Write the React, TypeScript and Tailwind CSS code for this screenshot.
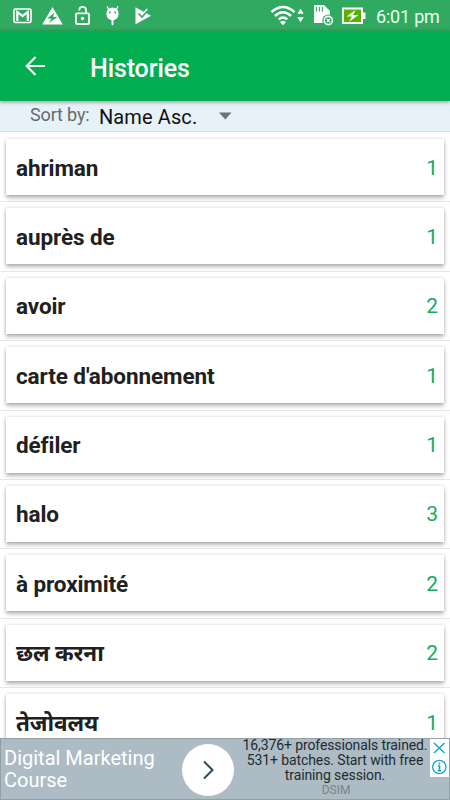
import React from "react";

const rows = [
  { word: "ahriman", count: 1 },
  { word: "auprès de", count: 1 },
  { word: "avoir", count: 2 },
  { word: "carte d'abonnement", count: 1 },
  { word: "défiler", count: 1 },
  { word: "halo", count: 3 },
  { word: "à proximité", count: 2 },
  { word: "छल करना", count: 2 },
  { word: "तेजोवलय", count: 1 },
];

function StatusBar() {
  return (
    <div className="flex h-[31px] shrink-0 items-center bg-[#30aa61] text-white">
      <svg width="160" height="31" viewBox="0 0 160 31" fill="none">
        <rect x="14" y="9" width="17" height="13.5" rx="1.5" stroke="#fff" strokeWidth="1.6" />
        <path d="M17.3 21V12L22.5 16.2L27.8 12V21" stroke="#fff" strokeWidth="2.2" />
        <path d="M52.5 7L62.8 24.5H42.2Z" fill="#fff" />
        <path d="M54.5 12.5L47 18.7L51.5 18.4L48.5 23L57.5 17L53 16.8Z" fill="#30aa61" />
        <rect x="76" y="13.3" width="13" height="10.7" rx="1" stroke="#fff" strokeWidth="1.8" />
        <path d="M79.3 10.5V10Q79.3 6.8 82.6 6.8T86 10V13" stroke="#fff" strokeWidth="1.8" />
        <circle cx="82.5" cy="18.5" r="1.7" fill="#fff" />
        <path d="M106.5 12.8A6 5.3 0 0 1 118.5 12.8V14.5A6 5.8 0 0 1 106.5 14.5Z" fill="#fff" />
        <path d="M109 10L107.2 6.8M116 10L117.8 6.8" stroke="#fff" strokeWidth="1.3" strokeLinecap="round" />
        <path d="M112.5 19V24.3" stroke="#fff" strokeWidth="2" strokeLinecap="round" />
        <circle cx="109.8" cy="12.5" r=".9" fill="#30aa61" />
        <circle cx="115.2" cy="12.5" r=".9" fill="#30aa61" />
        <path d="M135.5 7.2L151 15.8L135.5 24.3Z" fill="#fff" />
        <path d="M138.5 13.5L142 17L148 10.5" stroke="#30aa61" strokeWidth="1.6" />
        <path d="M144 12.6L147.3 9" stroke="#fff" strokeWidth="1.5" />
      </svg>
      <svg className="ml-[110px]" width="100" height="31" viewBox="270 0 100 31" fill="none">
        <path d="M271.5 12Q283 2 294.5 12M275 16Q283 8.7 291 16M278.7 19.4Q283 15.7 287.3 19.4" stroke="#fff" strokeWidth="2.4" />
        <path d="M280 22Q283 19.5 286 22L283 25.2Z" fill="#fff" />
        <path d="M297.3 13.7L300.5 8.8L303.7 13.7ZM297.3 17.3H303.7L300.5 22.2Z" fill="#fff" />
        <path d="M314 5H324L330 11V23H314Z" fill="#fff" />
        <path d="M316.5 7V11.5M319.5 7V11.5M322.5 7V11.5" stroke="#30aa61" strokeWidth="1.2" />
        <circle cx="328.3" cy="20.5" r="6" fill="#30aa61" />
        <circle cx="328.3" cy="20.5" r="4.1" stroke="#fff" strokeWidth="1.6" />
        <path d="M326.7 18.9L329.9 22.1M329.9 18.9L326.7 22.1" stroke="#fff" strokeWidth="1.3" />
        <rect x="343" y="8.5" width="19" height="14.5" fill="#57b200" stroke="#fff" strokeWidth="2" />
        <path d="M363 12.5H365.5V19H363Z" fill="#fff" />
        <path d="M355.5 10L346.5 16.5H352L349 21.8L358.5 15H353Z" fill="#fff" />
      </svg>
      <span className="ml-1.5 mt-[2px] whitespace-nowrap text-[18px] leading-[22px] tracking-[-0.2px] text-[#eafff0]">6:01 pm</span>
    </div>
  );
}

function AdBanner() {
  return (
    <div className="absolute inset-x-0 bottom-0 flex h-[62px] border border-[#92a0a7] bg-[#adbbc4]">
      <div className="mt-[8px] w-[181px] shrink-0 whitespace-nowrap pl-[3px] text-[20px] leading-[22px] text-white">
        Digital Marketing<br />Course
      </div>
      <div className="mt-[5px] flex size-[52px] shrink-0 items-center justify-center rounded-full bg-white">
        <svg width="14" height="20" viewBox="0 0 14 20" fill="none">
          <path d="M3 1.5L11.5 10L3 18.5" stroke="#254c5d" strokeWidth="2" />
        </svg>
      </div>
      <div className="-mt-px w-[202px] shrink-0 whitespace-nowrap text-center text-[14px] leading-[15px] tracking-[-0.11px] text-[#222b2f]">
        <div>16,376+ professionals trained.</div>
        <div>531+ batches. Start with free</div>
        <div>training session.</div>
        <div className="pl-0.5 text-[12px] leading-[14px] tracking-normal text-[#78858c]">DSIM</div>
      </div>
      <svg className="absolute right-0 top-0" width="19" height="38" viewBox="0 0 19 38" fill="none">
        <path d="M0 0H19V38H0Z" fill="#fff" />
        <path d="M4 4L14.5 14M14.5 4L4 14" stroke="#16a6cc" strokeWidth="1.5" />
        <circle cx="9.3" cy="28" r="6.7" stroke="#16a6cc" strokeWidth="1.3" />
        <path d="M9.5 23.5V25.5M8 27H9.5V31.5M7.7 31.7H11.3" stroke="#16a6cc" strokeWidth="1.6" />
      </svg>
    </div>
  );
}

export default function App() {
  return (
    <div className="relative flex h-[800px] w-[450px] flex-col overflow-hidden bg-white font-[Roboto,'Noto_Sans',sans-serif]">
      <StatusBar />
      <header className="relative z-10 flex h-[70px] shrink-0 items-center bg-[#03ae50] text-white shadow-[0_1px_4px_rgba(0,0,0,0.4)]">
        <svg className="ml-[25px]" width="21" height="22" viewBox="0 0 21 22" fill="none">
          <path d="M20 11H2M10.5 2L1.7 11L10.5 20" stroke="#fff" strokeWidth="2.1" />
        </svg>
        <h1 className="ml-[44px] mt-[5px] text-[25px] font-medium leading-[30px] tracking-[-0.1px]">Histories</h1>
      </header>
      <div className="flex h-[31px] shrink-0 items-start border-b border-[#d5dfe6] bg-[#e7f1f8]">
        <span className="ml-[30px] mt-[3px] w-[69px] whitespace-nowrap text-[18px] leading-[21px] tracking-[-0.15px] text-[#66696b]">Sort by:</span>
        <span className="mt-[4px] w-[120px] whitespace-nowrap text-[20px] leading-6 tracking-[0.1px] text-[#111]">Name Asc.</span>
        <svg className="mt-[11px]" width="13" height="8" viewBox="0 0 13 8"><path d="M0 .5H12.5L6.3 7.5Z" fill="#6c7378" /></svg>
      </div>
      <main className="shrink-0 pt-px">
        {rows.map((row) => (
          <div key={row.word} className="h-[69.4px] border-b border-[#e6e6e6] px-1.5 pt-[6px]">
            <div className="flex h-[56px] items-center justify-between bg-white pl-[10px] pr-[6px] shadow-[0_3px_4px_rgba(0,0,0,0.27),0_0_3px_rgba(0,0,0,0.16)]">
              <span className="mt-px whitespace-nowrap text-[22.5px] font-bold leading-7 tracking-[-0.1px] text-[#202020]">{row.word}</span>
              <span className="mt-px text-[21px] leading-7 text-[#12ae5b]">{row.count}</span>
            </div>
          </div>
        ))}
      </main>
      <AdBanner />
    </div>
  );
}
